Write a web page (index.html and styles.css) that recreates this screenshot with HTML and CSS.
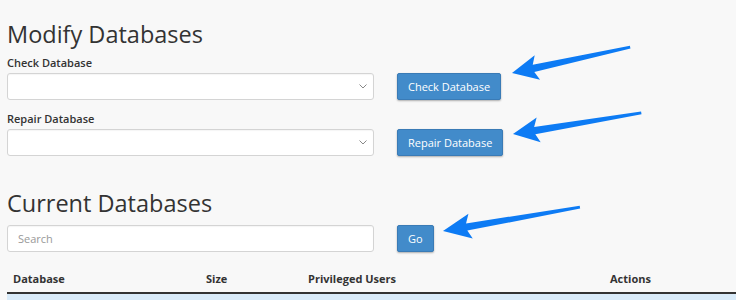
FILE: index.html
```html
<!DOCTYPE html>
<html lang="en">
<head>
    <meta charset="UTF-8">
    <title>MySQL Databases</title>
    <meta name="viewport" content="width=device-width, initial-scale=1.0">
    <link rel="stylesheet" href="styles.css">
</head>
<body>
    <div class="page">
        <h2 class="section-title">Modify Databases</h2>

        <label class="field-label" for="check-db">Check Database</label>
        <div class="form-row">
            <div class="select-wrap">
                <select id="check-db" class="form-control"></select>
                <svg class="chevron" width="8" height="5" viewBox="0 0 8 5"><path d="M0.5 0.5 L4 4 L7.5 0.5" fill="none" stroke="#888" stroke-width="1"/></svg>
            </div>
            <button class="btn-primary">Check Database</button>
        </div>

        <label class="field-label" for="repair-db">Repair Database</label>
        <div class="form-row">
            <div class="select-wrap">
                <select id="repair-db" class="form-control"></select>
                <svg class="chevron" width="8" height="5" viewBox="0 0 8 5"><path d="M0.5 0.5 L4 4 L7.5 0.5" fill="none" stroke="#888" stroke-width="1"/></svg>
            </div>
            <button class="btn-primary">Repair Database</button>
        </div>

        <h2 class="section-title current">Current Databases</h2>
        <div class="form-row">
            <input type="text" class="form-control search" placeholder="Search">
            <button class="btn-primary">Go</button>
        </div>

        <table class="db-table">
            <thead>
                <tr>
                    <th class="col-db">Database</th>
                    <th class="col-size">Size</th>
                    <th class="col-users">Privileged Users</th>
                    <th>Actions</th>
                </tr>
            </thead>
            <tbody>
                <tr class="info"><td colspan="4"></td></tr>
            </tbody>
        </table>
    </div>

    <!-- annotation arrows drawn over the screenshot -->
    <svg class="arrows" width="736" height="300" viewBox="0 0 736 300">
        <g fill="#0d7bf4">
            <polygon transform="translate(512 73) rotate(-12.4)" points="0,0 26,-12.5 22,-3.5 121,-1.4 121,1.4 22,3.8 26,12.5"/>
            <polygon transform="translate(513 134) rotate(-9.3)" points="0,0 26,-12.5 22,-3.5 130,-1.4 130,1.4 22,3.8 26,12.5"/>
            <polygon transform="translate(443 231) rotate(-9.9)" points="0,0 28,-12.5 24,-3.5 139,-1.4 139,1.4 24,3.8 28,12.5"/>
        </g>
    </svg>
</body>
</html>
```

FILE: styles.css
```css
body { margin: 0; background: #f8f8f8; font-family: "Open Sans", "DejaVu Sans", sans-serif; color: #333; }
.page { padding: 19px 0 0 7px; }

.section-title { font-size: 23.5px; font-weight: 400; line-height: 30px; margin: 0 0 6px; color: #333; }
.section-title.current { margin-top: 32px; margin-bottom: 7px; }

.field-label { display: block; font-size: 11px; font-weight: 600; line-height: 16px; margin-bottom: 2px; }

.form-row { display: flex; align-items: center; gap: 23px; margin-bottom: 11px; }

.select-wrap { position: relative; width: 367px; }
.select-wrap .chevron { position: absolute; right: 7px; top: 11px; pointer-events: none; }

.form-control {
    box-sizing: border-box; width: 367px; height: 27px; padding: 4px 10px;
    background: #fff; border: 1px solid #d4d4d4; border-radius: 3px;
    font-family: inherit; font-size: 11px; color: #555;
    appearance: none; -webkit-appearance: none; box-shadow: inset 0 1px 1px rgba(0,0,0,0.04);
}
.form-control::placeholder { color: #999; }

.btn-primary {
    box-sizing: border-box; height: 27px; padding: 0 10px;
    background: #428bca; color: #fff; border: 1px solid #3a7bb6; border-radius: 2px;
    font-family: inherit; font-size: 11px; box-shadow: 0 1px 2px rgba(0,0,0,0.3);
}

.db-table { width: 100%; border-collapse: collapse; margin-top: 10px; }
.db-table th {
    text-align: left; font-size: 11px; font-weight: 700; line-height: 16px;
    padding: 8px 6px 5px; border-bottom: 2px solid #333; color: #333;
}
.db-table .col-db { width: 181px; }
.db-table .col-size { width: 90px; }
.db-table .col-users { width: 290px; }
.db-table .info td { background: #d9ebf9; height: 30px; padding: 0; }

.arrows { position: absolute; left: 0; top: 0; pointer-events: none; }
```
